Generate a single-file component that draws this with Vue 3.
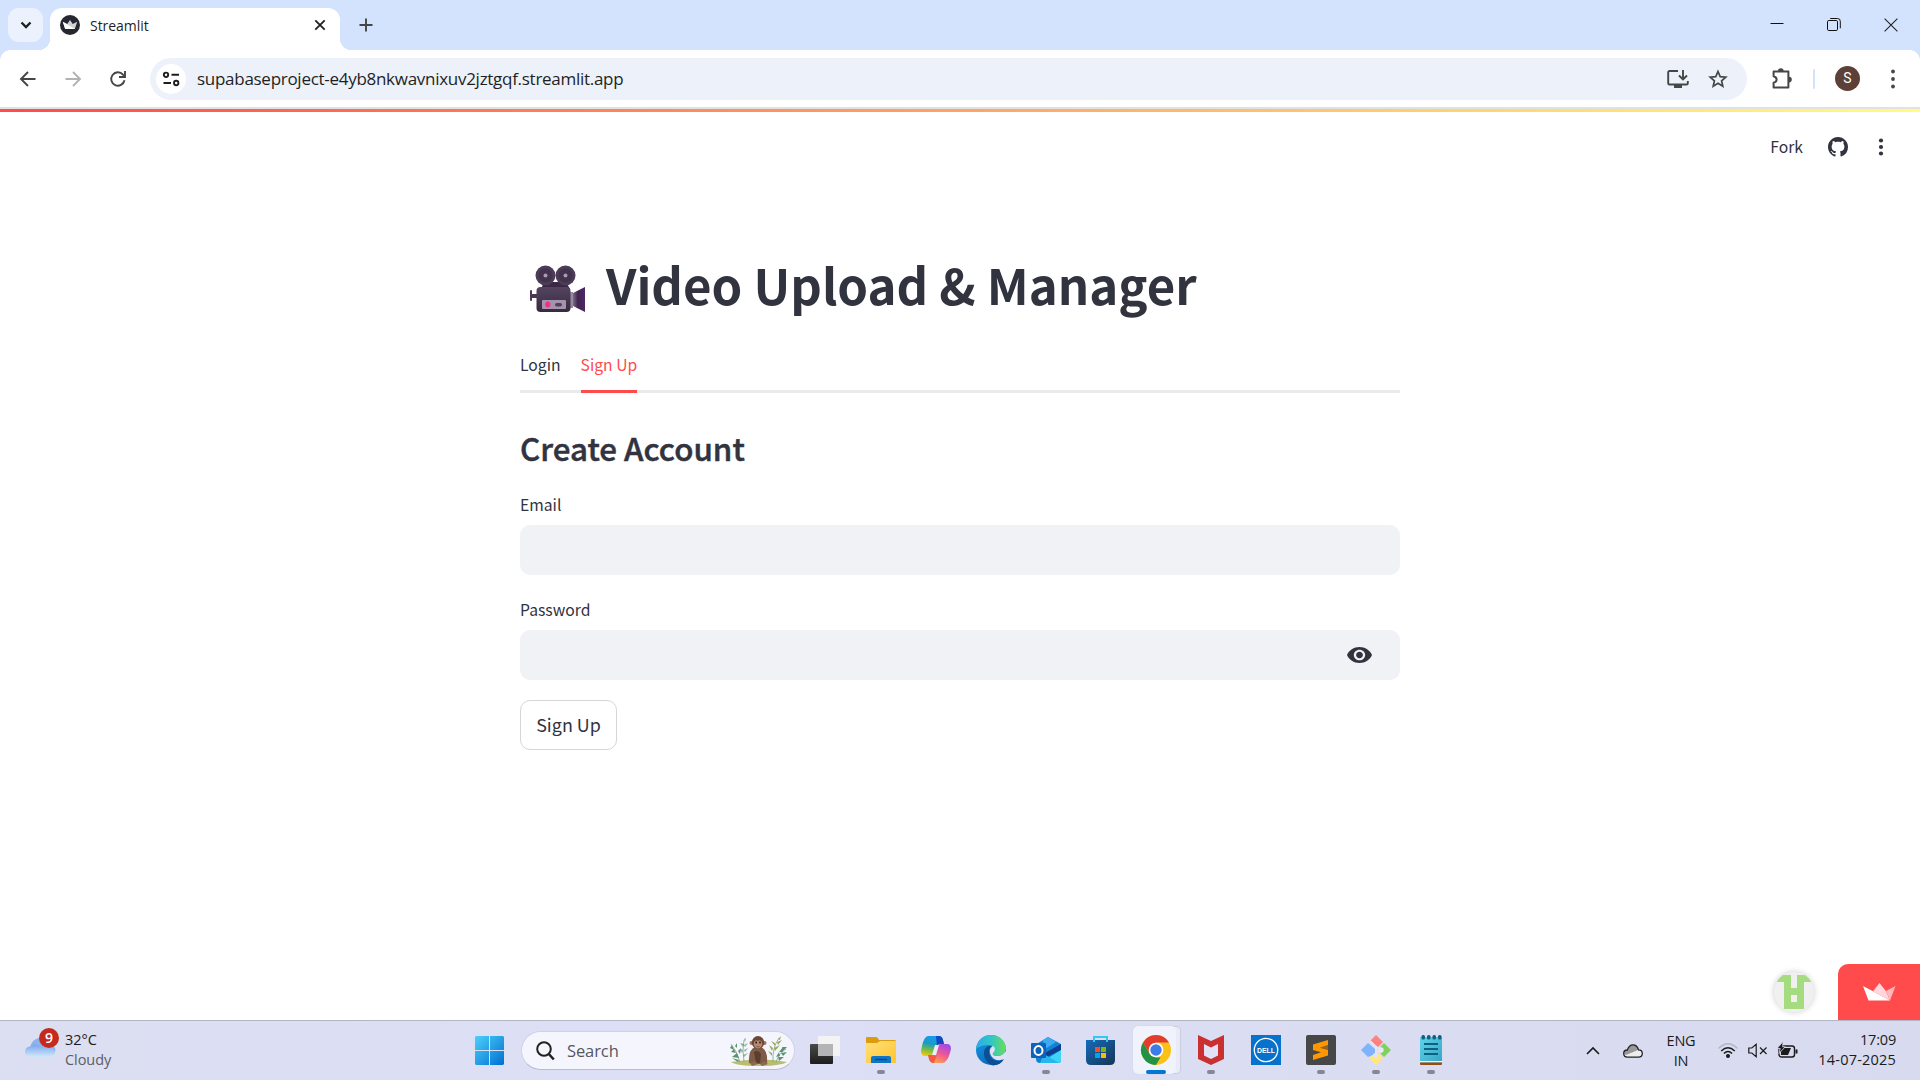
<script setup>
const url = 'supabaseproject-e4yb8nkwavnixuv2jztgqf.streamlit.app'
const teeth = [1423, 1428.5, 1434, 1439.5].map((x) => x - 1416)
</script>

<template>
  <div class="screen">
    <header class="tabstrip">
      <button class="tab-search">
        <svg width="12" height="8" viewBox="0 0 12 8"><path d="M1.5 1.5 6 6l4.500-4.500" fill="none" stroke="#1f1f1f" stroke-width="2.300" /></svg>
      </button>
      <div class="tab">
        <svg class="favicon" width="20" height="20" viewBox="0 0 20 20">
          <circle cx="10" cy="10" r="10" fill="#262730" />
          <path d="M2.800 6.700 7.300 9 10 5l2.700 4 4.500-2.300-2.400 7.300H5.200z" fill="#d4d4d6" />
          <path d="M2.800 6.700 14.800 14H5.200z" fill="#fff" />
        </svg>
        <span class="tab-title">Streamlit</span>
        <svg width="12" height="12" viewBox="0 0 12 12"><path d="M1.300 1.300l9.400 9.400M10.700 1.300 1.300 10.700" stroke="#1f1f1f" stroke-width="1.800" /></svg>
      </div>
      <button class="new-tab">
        <svg width="14" height="14" viewBox="0 0 14 14"><path d="M7 .5v13M.5 7h13" stroke="#444746" stroke-width="1.900" /></svg>
      </button>
      <div class="window-buttons">
        <svg width="14" height="14" viewBox="0 0 14 14"><path d="M.5 5.500h13" stroke="#111" stroke-width="1" /></svg>
        <svg width="14" height="14" viewBox="0 0 14 14" fill="none" stroke="#111"><rect x=".5" y="2.500" width="10" height="10" rx="1.300" /><path d="M3.200 .5h7.300q2.800 0 2.800 2.800v7" /></svg>
        <svg width="14" height="14" viewBox="0 0 14 14"><path d="M.6 .6l12.800 12.800M13.400 .6.6 13.400" stroke="#222" stroke-width="1.100" /></svg>
      </div>
    </header>

    <nav class="toolbar">
      <svg class="back" width="18" height="18" viewBox="0 0 18 18" fill="none" stroke="#444746" stroke-width="1.900"><path d="M16.500 9H2.500M9 2 2 9l7 7" /></svg>
      <svg class="forward" width="18" height="18" viewBox="0 0 18 18" fill="none" stroke="#b1b3b5" stroke-width="1.900"><path d="M1.500 9h14M9 2l7 7-7 7" /></svg>
      <svg class="reload" width="18" height="18" viewBox="0 0 18 18" fill="none" stroke="#444746" stroke-width="1.900"><path d="M15.500 10.300A6.700 6.700 0 1 1 14 4.600l1.800 1.900M16 1v6h-6" /></svg>
      <div class="omnibox">
        <span class="site-info">
          <svg width="18" height="18" viewBox="0 0 18 18" fill="none" stroke="#1f1f1f" stroke-width="1.900"><circle cx="4" cy="4.800" r="2.200" /><path d="M9.500 4.800H17M1.500 13H9" /><circle cx="14.200" cy="13" r="2.200" /></svg>
        </span>
        <span class="url">{{ url }}</span>
        <svg class="install" width="22" height="20" viewBox="0 0 22 20" fill="none" stroke="#444746" stroke-width="1.900"><path d="M11 2H2.500Q1.200 2 1.200 3.300v10.900q0 1.300 1.300 1.300h17q1.300 0 1.300-1.300V12" /><path d="M16 1v9M12 6.500l4 4 4-4" /><path d="M7 17.500h8" stroke-width="3" /></svg>
        <svg class="star" width="20" height="20" viewBox="0 0 20 20"><path d="m10 2.500 2.200 5.100 5.600.5-4.200 3.700 1.200 5.400L10 14.300l-4.800 2.900 1.200-5.400L2.200 8.100l5.600-.5z" fill="none" stroke="#444746" stroke-width="1.700" /></svg>
      </div>
      <svg class="puzzle" width="22" height="22" viewBox="0 0 22 22"><path d="M2.600 3.600h14.800v15.800H2.600v-4.600q3-.8 3-3.300t-3-3.300z" fill="none" stroke="#444746" stroke-width="2" stroke-linejoin="round" /><path d="M7 3a2.800 2.800 0 0 1 5.600 0zM18 8.800a2.800 2.800 0 0 1 0 5.600z" fill="#444746" /></svg>
      <i class="divider"></i>
      <span class="avatar">S</span>
      <svg class="menu" width="6" height="20" viewBox="0 0 6 20" fill="#444746"><circle cx="3" cy="2.500" r="1.900" /><circle cx="3" cy="10" r="1.900" /><circle cx="3" cy="17.500" r="1.900" /></svg>
    </nav>

    <main class="page">
      <div class="decoration"></div>
      <div class="app-header">
        <span class="fork">Fork</span>
        <svg width="20" height="20" viewBox="0 0 16 16" fill="#31333f"><path d="M8 0C3.580 0 0 3.580 0 8c0 3.540 2.290 6.530 5.470 7.590.4.070.55-.17.55-.38 0-.19-.01-.82-.01-1.490-2.010.37-2.530-.49-2.690-.94-.09-.23-.48-.94-.82-1.130-.28-.15-.68-.52-.01-.53.63-.01 1.080.58 1.230.82.72 1.210 1.870.87 2.330.66.07-.52.28-.87.51-1.070-1.780-.2-3.640-.89-3.640-3.950 0-.87.31-1.590.82-2.150-.08-.2-.36-1.020.08-2.120 0 0 .67-.21 2.200.82.64-.18 1.320-.27 2-.27s1.360.09 2 .27c1.530-1.040 2.200-.82 2.200-.82.44 1.100.16 1.920.08 2.120.51.56.82 1.270.82 2.150 0 3.070-1.870 3.750-3.650 3.950.29.25.54.73.54 1.480 0 1.070-.01 1.930-.01 2.200 0 .21.15.46.55.38A8.010 8.010 0 0 0 16 8c0-4.420-3.580-8-8-8" /></svg>
        <svg width="6" height="18" viewBox="0 0 6 18" fill="#31333f"><circle cx="3" cy="2.500" r="2.100" /><circle cx="3" cy="9" r="2.100" /><circle cx="3" cy="15.500" r="2.100" /></svg>
      </div>

      <section class="block">
        <h1>
          <svg class="camera" width="56" height="48" viewBox="0 0 56 48">
            <defs>
              <linearGradient id="cam" x2="0" y2="1"><stop stop-color="#54445f" /><stop offset="1" stop-color="#38293f" /></linearGradient>
              <linearGradient id="horn"><stop stop-color="#7c6b86" /><stop offset=".4" stop-color="#40244f" /><stop offset="1" stop-color="#4f2768" /></linearGradient>
            </defs>
            <rect y="25" width="2" height="11" rx="1" fill="#4a3955" /><path d="M1 29h7v4H1z" fill="#4a3955" />
            <path d="M11 24 14 17h22l4 7z" fill="#3a2846" />
            <circle cx="15.500" cy="10.500" r="10" fill="#4c3d57" /><circle cx="35.500" cy="10.500" r="10" fill="#4c3d57" />
            <circle cx="15.500" cy="10.500" r="7" fill="#43324d" /><circle cx="35.500" cy="10.500" r="7" fill="#43324d" />
            <circle cx="15.500" cy="10.500" r="2" fill="#aa9bb4" /><circle cx="35.500" cy="10.500" r="2" fill="#aa9bb4" />
            <path d="M40 27h3v16h-3z" fill="#9689a0" /><path d="M43 28 55 22v25l-12-6z" fill="url(#horn)" />
            <rect x="6.500" y="22" width="34" height="25" rx="4" fill="url(#cam)" />
            <rect x="12" y="35" width="24" height="9" rx="1" fill="#a493af" />
            <ellipse cx="17.800" cy="39.500" rx="2.600" ry="3" fill="#f3317a" /><rect x="25" y="38" width="7" height="3.500" rx="1.700" fill="#514057" />
          </svg>
          <span>Video Upload &amp; Manager</span>
        </h1>
        <div class="tabs">
          <span class="tab-item">Login</span>
          <span class="tab-item active">Sign Up</span>
        </div>
        <h2>Create Account</h2>
        <label>Email</label>
        <div class="field"></div>
        <label>Password</label>
        <div class="field">
          <svg width="25" height="16" viewBox="0 0 22 15" preserveAspectRatio="none"><path fill="#31333f" fill-rule="evenodd" d="M11 0C6 0 1.730 3.110 0 7.500 1.730 11.890 6 15 11 15s9.270-3.110 11-7.500C20.270 3.110 16 0 11 0zm0 12.500c-2.760 0-5-2.240-5-5s2.240-5 5-5 5 2.240 5 5-2.240 5-5 5zm0-8c-1.660 0-3 1.340-3 3s1.340 3 3 3 3-1.340 3-3-1.340-3-3-3z" /></svg>
        </div>
        <button class="submit">Sign Up</button>
      </section>

      <aside class="badges">
        <span class="profile">
          <svg width="34" height="34" viewBox="0 0 34 34" fill="#a5dc80"><path fill-rule="evenodd" d="M4 0h10v13h6V0h10l4 4v3h-7v27H7V7H0V4zM14 20h6v7h-6z" /></svg>
        </span>
        <span class="hosted">
          <svg width="33" height="18" viewBox="0 0 33 18"><path d="M0 3 10.500 8.500 27 17.500H5.500z" fill="#fff" /><path d="M10 8.300 16.500 0l6.500 8.300 4 9.200z" fill="#ffd7dd" /><path d="M32.500 3 23 8l4 9.500z" fill="#ffb7bc" /></svg>
        </span>
      </aside>
    </main>

    <footer class="taskbar">
      <div class="weather">
        <svg width="34" height="34" viewBox="0 0 34 34">
          <defs><linearGradient id="cl" x2="0" y2="1"><stop stop-color="#79a6ea" /><stop offset="1" stop-color="#d2e7fb" /></linearGradient></defs>
          <path d="M6 26a9 9 0 0 1 18-8 6 6 0 0 1 6 8z" fill="#8db3ed" />
          <path d="M6 31q-6 0-6-5t5-5.500q4-4 10 0 2 2 6 1 9 0 9 4.500t-5 5z" fill="url(#cl)" />
          <circle cx="24" cy="12" r="10" fill="#c42b1c" />
          <text x="24" y="17" text-anchor="middle" class="badge-text">9</text>
        </svg>
        <div class="stack"><span>32°C</span><span class="muted">Cloudy</span></div>
      </div>

      <div class="apps">
        <span class="slot start">
          <svg width="29" height="29" viewBox="0 0 29 29"><defs><linearGradient id="win" x2="1" y2="1"><stop stop-color="#4cd0fb" /><stop offset="1" stop-color="#006fd0" /></linearGradient></defs><path d="M1 0h13v14H0V1zM15 0h13l1 1v13H15zM0 15h14v14H1l-1-1zM15 15h14v13l-1 1H15z" fill="url(#win)" /></svg>
        </span>
        <div class="search">
          <svg width="19" height="20" viewBox="0 0 19 20" fill="none" stroke="#222"><circle cx="8" cy="8" r="6.800" stroke-width="2" /><path d="m12.800 13 5 5.500" stroke-width="2.600" /></svg>
          <span>Search</span>
          <svg width="60" height="32" viewBox="0 0 60 32">
            <path d="M2 27q28-5 56 0-6 4-28 4T2 27z" fill="#b9bd6e" />
            <g fill="none" stroke="#6d9c78" stroke-width=".7"><path d="M11 27Q8 16 2 9M15 27q-2-12 0-22M44 27q-1-14 6-24M47 27q3-9 10-13" /></g>
            <g fill="#5b9370"><path d="M3 10l-2 3 4 2zM5 14l-3 3 5 1zM8 18l-5 4 7 1zM6 11l2-3 0 5zM9 16l3-3-1 6zM3 23l7 2-1 2z" /><path d="M15 4l2-1-1 4zM15 9l-4-1 3 4zM15 10l4-2-3 4zM14 15l-3-1 2 4zM15 15l4-2-3 4zM14 20l5-2-4 4z" opacity=".7" /><path d="M53 12l5 0-4 4zM50 17l4-5 0 5zM52 18l6-1-4 4zM47 22l3-5 1 4zM49 22l6 0-5 4z" /></g>
            <g fill="#9ba85b"><path d="M49 4l3-3-1 4zM46 8l-4-2 4 5zM48 7l5-2-4 5zM44 13l-4-3 3 6zM45 13l6-3-5 6zM43 18l-4-2 4 5z" /></g>
            <path d="M20 28q-1-13 6-16h6q7 3 6 16l-4 1h-10z" fill="#7d5b47" />
            <path d="M25 17q4-3 7 2l-1 9h-4z" fill="#5b3e2e" /><path d="M21 28l5-2 3 3-6 2zM31 29l4-3 4 3-6 2z" fill="#8c6850" />
            <circle cx="22.500" cy="8" r="2" fill="#a57358" /><circle cx="35.500" cy="8" r="2" fill="#a57358" />
            <ellipse cx="29" cy="7.500" rx="6.200" ry="6.500" fill="#6b4736" /><path d="M25 7q2-3 4-1 2-2 4 1 1 3-1 5-3 3-6 0-2-2-1-5z" fill="#b58a72" />
            <circle cx="27.200" cy="7.500" r=".9" fill="#25150e" /><circle cx="31" cy="7.500" r=".9" fill="#25150e" /><path d="M27.500 11.500q1.500.8 3 0" stroke="#60382a" stroke-width=".6" fill="none" />
          </svg>
        </div>
        <span class="slot taskview">
          <svg width="30" height="28" viewBox="0 0 30 28"><defs><linearGradient id="tv" x2="0" y2="1"><stop stop-color="#494949" /><stop offset="1" stop-color="#1d1d1d" /></linearGradient></defs><rect y="8" width="23" height="20" rx="1" fill="url(#tv)" /><rect x="8" width="22" height="20" rx="1" fill="#f3f3f4" /><path d="M8 8h15v12H9l-1-1z" fill="#b4b4b6" /></svg>
        </span>
        <span class="slot running">
          <svg width="30" height="30" viewBox="0 0 30 30"><defs><linearGradient id="fo" x2="1" y2="1"><stop stop-color="#ffe07c" /><stop offset="1" stop-color="#ffc42c" /></linearGradient></defs><path d="M0 3q0-1 1-1h9q2 0 3 3h16l1 1v6H0z" fill="#dc9c0d" /><path d="M0 8h11l3-2h15q1 0 1 1v21H0z" fill="url(#fo)" /><path d="M5 28v-5q0-2 2-2h16q2 0 2 2v5z" fill="#0f75c6" /><path d="M9 24.500h12" stroke="#064779" stroke-width="1.300" /></svg>
        </span>
        <span class="slot">
          <svg width="30" height="30" viewBox="0 0 30 30">
            <defs><linearGradient id="ca" x1=".5" x2=".3" y2="1"><stop stop-color="#159bed" /><stop offset=".4" stop-color="#1c9bc6" /><stop offset=".7" stop-color="#76bd3e" /><stop offset="1" stop-color="#f7c51c" /></linearGradient><linearGradient id="cb" x1=".8" x2=".3" y2="1"><stop stop-color="#9c48ec" /><stop offset=".5" stop-color="#ee5795" /><stop offset="1" stop-color="#ffa34c" /></linearGradient></defs>
            <path d="M8 1h10q3 0 4 4l1 4h-4q-3 0-4 4l-2 7q-1 1-3 1H4q-4 0-4-5Q2 4 5 2q1-1 3-1z" fill="url(#ca)" />
            <path d="M15 1h3q3 0 4 4l1 4h-4q-2 0-3 2z" fill="#1646c2" />
            <path d="M7 20h4q2-1 3-4l2-4q1-3 4-3h6q4 0 4 5-2 9-5 12-1 2-4 2H12q-3 0-4-4z" fill="url(#cb)" />
            <path d="M7 20h5q2 1 4 0l-3 8q-4 0-5-4z" fill="#f15b41" /><path d="M14 10h4l-3 10h-4z" fill="#e6effa" />
          </svg>
        </span>
        <span class="slot">
          <svg width="30" height="30" viewBox="0 0 30 30">
            <defs><linearGradient id="ea"><stop stop-color="#2aabea" /><stop offset=".5" stop-color="#31c6c7" /><stop offset="1" stop-color="#68df55" /></linearGradient><linearGradient id="eb" x2=".6" y2="1"><stop stop-color="#159ce2" /><stop offset="1" stop-color="#0b67bd" /></linearGradient></defs>
            <circle cx="15" cy="15" r="15" fill="url(#eb)" />
            <path d="M0 14C1 5 7 0 15 0c9 0 15 7 15 13 0 5-4 8-9 8q-5 0-4-3c3-4-1-8-5-8C5 10 1 13 0 14z" fill="url(#ea)" />
            <path d="M8 18c0-5 4-8 8-7-5 3-4 14 5 15 3 0 5-1 7-2-3 5-8 7-12 6-5-2-8-6-8-12z" fill="#0c4f94" />
            <path d="M17 11c3 2 2 5 0 7-1 2 1 3 4 3 4 0 7-2 9-5l1 7-3 1c-3 1-8 3-12-2-3-4-3-9 1-11z" fill="#dfe1f5" />
            <path d="M13 17c0 7 6 10 10 9 2 0 4-1 5-2-3 5-8 7-13 6-3-4-4-9-2-13z" fill="#0c4f94" />
          </svg>
        </span>
        <span class="slot running">
          <svg width="30" height="30" viewBox="0 0 30 30"><path d="M4 10 17 2l13 7v16q0 3-3 3H9q-4 0-4-4z" fill="#1182d4" /><path d="M12 5l5-3 8 5-11 7z" fill="#3faaf0" /><path d="m14 18 16-9v6l-16 8z" fill="#103f91" /><path d="m9 28 21-13v10q0 3-3 3z" fill="#3ed4f5" /><path d="m13 19 15 9H9z" fill="#27b7ed" /><rect y="8" width="15" height="15" rx="1" fill="#0f62ba" /><ellipse cx="7.500" cy="15.500" rx="4" ry="4.500" fill="none" stroke="#fff" stroke-width="2" /></svg>
        </span>
        <span class="slot">
          <svg width="30" height="30" viewBox="0 0 30 30"><defs><linearGradient id="st" x2="1" y2="1"><stop stop-color="#146bbb" /><stop offset="1" stop-color="#173454" /></linearGradient></defs><path d="M0 5h29v20q0 5-5 5H5q-5 0-5-5z" fill="url(#st)" /><path d="M8 7V2h13v5" fill="none" stroke="#35c6f3" stroke-width="2" /><path d="M9 12h5v5H9z" fill="#f25022" /><path d="M15 12h5v5h-5z" fill="#7fba00" /><path d="M9 18h5v5H9z" fill="#00a4ef" /><path d="M15 18h5v5h-5z" fill="#ffb900" /></svg>
        </span>
        <span class="slot current">
          <svg width="30" height="30" viewBox="0 0 30 30"><circle cx="15" cy="15" r="15" fill="#fbc116" /><path d="M2 7.500A15 15 0 0 1 28 7.500H15L8.500 18.700z" fill="#e33b2e" /><path d="M2 7.500 8.500 18.700Q11 22 15 22.500h4.500L15 30A15 15 0 0 1 2 7.500z" fill="#229342" /><circle cx="15" cy="15" r="7.300" fill="#fff" /><circle cx="15" cy="15" r="5.700" fill="#3d7be8" /></svg>
        </span>
        <span class="slot running">
          <svg width="30" height="30" viewBox="0 0 30 30"><path d="M2 0 15 6 28 0v24l-13 6L2 24z" fill="#c9302f" /><path d="m8 9 7 3.500L22 9v11.500L15 24l-7-3.500z" fill="#e1e2f5" /></svg>
        </span>
        <span class="slot">
          <svg width="30" height="30" viewBox="0 0 30 30"><path d="M0 0h30v30H0z" fill="#0672cb" /><circle cx="15" cy="15" r="11.700" fill="none" stroke="#fff" stroke-width="1.300" /><text x="15" y="18" text-anchor="middle" textLength="18" lengthAdjust="spacingAndGlyphs" class="dell">DELL</text></svg>
        </span>
        <span class="slot running">
          <svg width="30" height="30" viewBox="0 0 30 30"><rect width="30" height="30" rx="2" fill="#474747" /><path d="M7 9.500 22 5v5l-8 2.800 8 2.200v5.500L7 25v-5l8-2.700-8-2.300z" fill="#ff9800" /><path d="M7 15 22 10v5l-8-2.200z" fill="#d97900" opacity=".55" /></svg>
        </span>
        <span class="slot running">
          <svg width="30" height="30" viewBox="0 0 30 30"><path d="m15 0 7 7-5 5q-2-2-3-1L9 6z" fill="#ff8080" /><path d="m23 8 7 7-7 7-4-4q4-1 2-4t-3-1z" fill="#80d15c" /><path d="m7 8 7 6v4q-2 0-2 2l-5 2-7-7z" fill="#80b3ff" /><path d="m8 23 5-4 2 2 3-3 4 5-7 7z" fill="#ffe680" /><circle cx="20" cy="15" r="2.700" fill="#e8e9f7" /><path d="m9 6 6 6v8M15 12l5 3" fill="none" stroke="#e3e5f6" stroke-width="2" /><circle cx="15" cy="20.500" r="2.200" fill="#e3e5f6" /></svg>
        </span>
        <span class="slot running">
          <svg width="30" height="30" viewBox="0 0 30 30"><defs><linearGradient id="np" x2="1" y2="1"><stop stop-color="#62d2ea" /><stop offset="1" stop-color="#35a5c4" /></linearGradient></defs><rect x="4" y="2" width="22" height="26" rx="1" fill="url(#np)" /><path d="M4 26h22v1.500H4z" fill="#fff" /><path d="M4 27.500h22V29q0 1-1 1H5q-1 0-1-1z" fill="#994b12" /><path d="M8 9h14M8 14h14M8 19h14" stroke="#0b6180" stroke-width="2" /><rect v-for="x in teeth" :key="x" :x="x - 1.500" y="0" width="3.500" height="4.500" rx="1.500" fill="#0b6180" /></svg>
        </span>
      </div>

      <div class="tray">
        <svg class="chevron" width="14" height="8" viewBox="0 0 14 8"><path d="M1 7 7 1l6 6" fill="none" stroke="#1b1b1b" stroke-width="1.600" /></svg>
        <svg class="onedrive" width="20" height="14" viewBox="0 0 20 14"><path d="M4.500 13.200Q.7 13 .7 9.500T4.300 6Q6 .8 10 .8t5.500 5q3.800 0 3.800 3.700t-3.800 3.700z" fill="#eee" /><path d="M1 10Q.8 6.500 4.300 6 6 .8 10 .8t5.500 5L9 8.500 3 11z" fill="#999" /><path d="M4.500 13.200Q.7 13 .7 9.500T4.300 6Q6 .8 10 .8t5.500 5q3.800 0 3.800 3.700t-3.800 3.700z" fill="none" stroke="#222" stroke-width="1.300" /></svg>
        <div class="stack lang"><span>ENG</span><span>IN</span></div>
        <svg class="wifi" width="20" height="15" viewBox="0 0 20 15" fill="none" stroke="#1b1b1b" stroke-width="1.400"><path d="M.5 5.500q9.500-9.500 19 0" stroke="#b2b3c4" /><path d="M3.200 8q6.800-6.500 13.600 0M5.900 10.500q4.100-4 8.200 0" /><circle cx="10" cy="13" r="1.300" fill="#1b1b1b" /></svg>
        <svg class="sound" width="20" height="15" viewBox="0 0 20 15" fill="none" stroke="#1b1b1b" stroke-width="1.200"><path d="M.8 5h3l4.400-3.800v12.600L3.800 10h-3zM12 4.500l6.500 6.500M18.500 4.500 12 11" /></svg>
        <svg class="battery" width="20" height="16" viewBox="0 0 20 16"><rect x="1" y="4" width="15.500" height="11" rx="2.500" fill="none" stroke="#1b1b1b" stroke-width="1.400" /><path d="M3 6h10l-3 7H3z" fill="#1b1b1b" /><path d="M17.500 7.500h2v4h-2z" fill="#1b1b1b" /><path d="M5-.5-.8 6.500h3L1 11.500 7.200 4.800H4.600z" fill="#1b1b1b" stroke="#d9dcf1" stroke-width=".8" /></svg>
        <div class="stack clock"><span>17:09</span><span class="date">14-07-2025</span></div>
      </div>
    </footer>
  </div>
</template>

<style>
body { margin: 0; overflow: hidden; }
</style>

<style scoped>
* { box-sizing: border-box; }
svg { display: block; flex: none; overflow: visible; }
button { padding: 0; border: 0; background: none; }
.screen { width: 1920px; height: 1080px; display: flex; flex-direction: column; background: #fff; font-family: "Open Sans", "Noto Sans", sans-serif; color: #1f1f1f; }

.tabstrip { height: 50px; flex: none; display: flex; align-items: flex-start; padding: 8px 22px 0 8px; background: #d3e3fd; }
.tab-search { width: 35px; height: 34px; border-radius: 11px; background: #ebf2fe; display: grid; place-items: center; }
.tab { position: relative; width: 290px; height: 42px; margin-left: 7px; padding: 0 14px 8px 10px; display: flex; align-items: center; background: #fff; border-radius: 12px 12px 0 0; }
.tab::before, .tab::after { content: ""; position: absolute; bottom: 0; width: 12px; height: 12px; }
.tab::before { left: -12px; background: radial-gradient(circle at 0 0, transparent 12px, #fff 12.500px); }
.tab::after { right: -12px; background: radial-gradient(circle at 100% 0, transparent 12px, #fff 12.500px); }
.tab-title { flex: 1; margin-left: 10px; font-size: 14px; letter-spacing: -.05px; }
.new-tab { margin: 10px 0 0 19px; }
.window-buttons { display: flex; gap: 43px; margin: 10px 0 0 auto; }

.toolbar { height: 59px; flex: none; display: flex; align-items: center; padding: 0 24px 0 19px; background: #fff; border-bottom: 2px solid #e0e1e1; position: relative; }
.toolbar::before, .toolbar::after { content: ""; position: absolute; top: 0; width: 10px; height: 10px; }
.toolbar::before { left: 0; background: radial-gradient(circle at 100% 100%, transparent 9.500px, #d3e3fd 10px); }
.toolbar::after { right: 0; background: radial-gradient(circle at 0 100%, transparent 9.500px, #d3e3fd 10px); }
.forward { margin-left: 27px; }
.reload { margin-left: 27px; }
.omnibox { width: 1597px; height: 42px; margin-left: 23px; padding: 0 19px 0 6px; display: flex; align-items: center; border-radius: 21px; background: #ecf1fa; margin-top: 1px; }
.site-info { width: 30px; height: 30px; border-radius: 50%; background: #fff; display: grid; place-items: center; }
.url { flex: 1; margin-left: 11px; font-size: 17px; line-height: 24px; letter-spacing: -.28px; margin-top: -1px; }
.star { margin-left: 19px; }
.puzzle { margin-left: 24px; }
.divider { width: 2px; height: 20px; margin-left: 20px; border-radius: 1px; background: #d3e3fd; }
.avatar { width: 25px; height: 25px; margin-left: 20px; border-radius: 50%; background: #5d4037; color: #fff; font: 14px/25px Roboto, sans-serif; text-align: center; }
.menu { margin-left: 30px; }

.page { position: relative; height: 911px; flex: none; font-family: "Noto Sans CJK SC", sans-serif; color: #31333f; }
.decoration { height: 3px; background: linear-gradient(90deg, #ff4b4b, #fffd80); }
.app-header { height: 69px; display: flex; align-items: center; justify-content: flex-end; padding: 0 36px 0 0; }
.app-header svg:last-child { margin-left: 30px; }
.fork { font-size: 15.700px; line-height: 24px; margin-right: 25px; }
.block { width: 880px; margin: 0 auto; }
h1 { display: flex; align-items: center; height: 66px; margin: 70px 0 0; padding-left: 10px; font-size: 49.150px; line-height: 66px; font-weight: 700; white-space: nowrap; }
h1 span { margin: 0 0 0 20px; }
.camera { margin-top: 9px; }
.tabs { display: flex; gap: 20px; height: 50px; margin-top: 26px; border-bottom: 3px solid #e9eaeb; }
.tab-item { height: 50px; font-size: 15.700px; line-height: 43px; }
.active { color: #ff4b4b; border-bottom: 3px solid #ff4b4b; }
h2 { margin: 31px 0 0; height: 50px; font-size: 31.300px; line-height: 48px; font-weight: 500; -webkit-text-stroke: .5px currentColor; }
label { display: block; height: 30px; font-size: 15.700px; line-height: 20px; }
h2 + label { margin-top: 21px; }
.field { height: 50px; border-radius: 10px; background: #f0f2f6; display: flex; align-items: center; justify-content: flex-end; padding: 0 28px 1px 0; }
.field + label { margin-top: 25px; }
.submit { display: block; width: 97px; height: 50px; margin-top: 20px; border: 1px solid #d6d6d9; border-radius: 10px; font: 17.900px/44px "Noto Sans CJK SC", sans-serif; padding-bottom: 2px; color: #31333f; }
.badges { position: absolute; right: 0; bottom: 0; display: flex; align-items: flex-start; gap: 24px; }
.profile { width: 40px; height: 40px; margin-top: 8px; border-radius: 50%; background: #f0f0f0; overflow: hidden; display: grid; place-items: center; box-shadow: 0 0 6px #0003; }
.hosted { width: 82px; height: 56px; border-radius: 10px 0 0; background: #ff4b4b; display: grid; place-items: center; }

.taskbar { height: 60px; flex: none; display: flex; border-top: 1px solid #b3b4c4; background: linear-gradient(90deg, #dcdef2, #dddff6 40%, #dadcf1 75%, #d8dbf0); }
.weather { width: 462px; display: flex; padding: 5px 0 0 25px; }
.stack { display: flex; flex-direction: column; font-size: 14.500px; line-height: 20px; letter-spacing: -.2px; color: #1b1b1b; }
.weather .stack { margin: 4px 0 0 6px; letter-spacing: -.05px; }
.stack .muted { color: #5c5d68; }
.badge-text { font: 600 14px "Open Sans", sans-serif; fill: #fff; }
.apps { display: flex; align-items: center; }
.slot { position: relative; width: 55px; height: 59px; padding-bottom: 1px; display: grid; place-items: center; }
.slot svg { position: relative; }
.running::after, .current::after { content: ""; position: absolute; left: 50%; bottom: 6px; width: 8px; height: 4px; border-radius: 2px; background: #868792; transform: translateX(-50%); }
.current::after { width: 20px; background: #0078d4; }
.current::before { content: ""; position: absolute; left: 5px; top: 5px; width: 43px; height: 48px; border-radius: 5px; background: #f0f2fc; box-shadow: 5px 0 0 -1px #e9ebf8, 5px 0 1px #c9cbdf, 0 0 1px #c4c6da; }
.search { width: 274px; height: 39px; margin: 0 3px 0 4px; padding: 0 5px 0 14px; display: flex; align-items: center; border: 1px solid #d0d1e8; border-bottom-color: #b9bad2; border-radius: 20px; background: #f5f6fd; font-size: 16.500px; color: #555662; }
.search span { flex: 1; margin-left: 12px; letter-spacing: -.1px; }
.taskview { padding-right: 1px; }
.dell { font: 700 7.500px "Liberation Sans", sans-serif; fill: #fff; }
.tray { display: flex; align-items: center; margin-left: auto; padding-right: 24px; }
.onedrive { margin-left: 23px; }
.lang { width: 36px; margin-left: 20px; align-items: center; }
.wifi { margin-left: 19px; }
.sound { margin-left: 10px; }
.battery { margin-left: 10px; margin-top: -2px; }
.clock { width: 98px; align-items: flex-end; margin-top: -2px; }
.date { letter-spacing: .2px; }
</style>
